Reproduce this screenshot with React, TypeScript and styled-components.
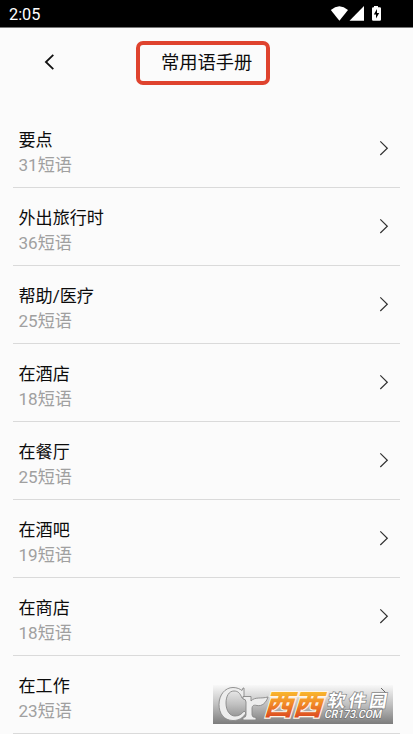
import React from 'react';
import styled, { createGlobalStyle } from 'styled-components';

const GlobalStyle = createGlobalStyle`
  * { box-sizing: border-box; }
  html, body { margin: 0; padding: 0; background: #fbfbfb; overflow: hidden; }
`;

const Screen = styled.div`
  position: relative;
  display: flex;
  flex-direction: column;
  width: 413px;
  height: 734px;
  overflow: hidden;
  background: #fbfbfb;
  color: #0c0c0c;
  font-family: Roboto, 'Noto Sans CJK SC', sans-serif;
`;

const StatusBar = styled.header`
  display: flex;
  flex: none;
  align-items: center;
  justify-content: space-between;
  height: 28px;
  padding: 0 31px 0 9px;
  background: #000;
  border-bottom: 1px solid #777;
  color: #fff;
`;

const Clock = styled.span`
  padding-top: 1px;
  font-size: 16.3px;
  font-weight: 450;
  line-height: 27px;
`;

const StatusIcons = styled.svg`
  display: block;
  width: 52px;
  height: 27px;
`;

const NavBar = styled.nav`
  display: flex;
  flex: none;
  height: 82px;
`;

const BackButton = styled.button`
  display: block;
  width: 20px;
  height: 24px;
  margin: 22px 0 0 40px;
  padding: 0;
  border: 0;
  background: none;
`;

const TitleFrame = styled.h1`
  width: 134px;
  height: 44px;
  margin: 13px 0 0 76px;
  padding-left: 21px;
  border: 4px solid #df432e;
  border-radius: 7px;
  font-size: 18.3px;
  font-weight: 400;
  line-height: 36px;
  white-space: nowrap;
`;

const PhraseList = styled.ul`
  flex: none;
  margin: 0 13px;
  padding: 0;
  list-style: none;
`;

const Row = styled.li`
  display: flex;
  justify-content: space-between;
  height: 78px;
  padding: 17px 11px 0 5.5px;
  border-bottom: 1px solid #dadada;
`;

const RowText = styled.div`
  display: flex;
  flex-direction: column;
`;

const RowTitle = styled.span`
  height: 25px;
  font-size: 17.1px;
  line-height: 26px;
`;

const RowCount = styled.span`
  height: 26px;
  color: #a0a0a0;
  font-size: 17.1px;
  font-weight: 400;
  line-height: 26px;
`;

const Chevron = styled.svg`
  width: 11px;
  height: 18px;
  margin-top: 12px;
`;

const Watermark = styled.svg`
  position: absolute;
  left: 213px;
  top: 685px;
  width: 180px;
  height: 39px;
  overflow: visible;
`;

const categories = [
  { title: '要点', count: 31 },
  { title: '外出旅行时', count: 36 },
  { title: '帮助/医疗', count: 25 },
  { title: '在酒店', count: 18 },
  { title: '在餐厅', count: 25 },
  { title: '在酒吧', count: 19 },
  { title: '在商店', count: 18 },
  { title: '在工作', count: 23 },
];

function SiteMark() {
  return (
    <Watermark viewBox="0 0 180 39">
      <defs>
        <linearGradient id="plate" x1="0" y1="0" x2="0" y2="1">
          <stop offset="0" stopColor="#f8f8f8" />
          <stop offset="0.5" stopColor="#c0c0c0" />
          <stop offset="1" stopColor="#7c7c7c" />
        </linearGradient>
        <linearGradient id="orange" x1="0" y1="0" x2="0" y2="1">
          <stop offset="0.25" stopColor="#f9b52c" />
          <stop offset="0.55" stopColor="#f08627" />
          <stop offset="0.85" stopColor="#dc4b20" />
        </linearGradient>
      </defs>
      <rect width="180" height="39" fill="url(#plate)" />
      <path
        d="M31 3V13H29C27 8 25 6 21 6C16 6 13 11 13 18C13 26 17 31 22 31C26 31 29 29 31 26L33 28C30 33 26 35.5 20 35.5C11 35.5 6 28.5 6 19.5C6 10 12 2.5 20 2.5C24 2.5 27 4 29 5.5L30 3Z"
        fill="#ededed" stroke="#888" strokeWidth="0.9"
      />
      <path
        d="M30 11.5H38V16C42 11.5 48 14 55 12C53 18 49 21.5 44 20.5C40 19.5 39 21 39 24V30Q39 32.5 43 32.5V35H30V32.5Q33 32.5 33 30V17Q33 14 30 14Z"
        fill="#ededed" stroke="#888" strokeWidth="0.9"
      />
      <g transform="translate(50.5 30.3) skewX(-17)">
        <text
          x="0" y="0" textLength="58" lengthAdjust="spacingAndGlyphs"
          fontFamily="'Noto Sans CJK SC', sans-serif" fontSize="28.5" fontWeight="900"
          fill="url(#orange)" stroke="#fff5e8" strokeWidth="2.2" paintOrder="stroke"
        >西西</text>
      </g>
      <path d="M168 3L174 9L173 11" fill="none" stroke="#666" strokeWidth="1" />
      <g transform="translate(114 21.5) skewX(-10)">
        <text
          x="0" y="0" textLength="59" lengthAdjust="spacing"
          fontFamily="'Noto Sans CJK SC', sans-serif" fontSize="17.5" fontWeight="700"
          fill="#fff" stroke="#888" strokeWidth="1.5" paintOrder="stroke"
        >软件园</text>
      </g>
      <g transform="translate(111 33) skewX(-12)">
        <text
          x="0" y="0" textLength="57" lengthAdjust="spacingAndGlyphs"
          fontFamily="Roboto, sans-serif" fontSize="11.5" fontWeight="500"
          fill="#fff" stroke="#777" strokeWidth="1.5" paintOrder="stroke"
        >CR173.COM</text>
      </g>
    </Watermark>
  );
}

export default function App() {
  return (
    <>
      <GlobalStyle />
      <Screen>
        <StatusBar>
          <Clock>2:05</Clock>
          <StatusIcons viewBox="0 0 52 27" fill="#fff">
            <path d="M0.8 10Q9.4 2.6 18 10L9.4 20.8Z" />
            <path d="M34 6V20.7H19.5Z" />
            <path d="M44 6H48V7.3H49.8Q51 7.3 51 8.5V19.5Q51 20.8 49.8 20.8H43.2Q42 20.8 42 19.5V8.5Q42 7.3 43.2 7.3H44Z" />
            <path d="M47 9L43.8 14.5H46V18.5L49.2 13H47Z" fill="#000" />
          </StatusIcons>
        </StatusBar>
        <NavBar>
          <BackButton aria-label="返回">
            <svg width="20" height="24" viewBox="0 0 20 24">
              <path d="M13.3 4.8L5.9 12L13.3 19.2" fill="none" stroke="#111" strokeWidth="1.8" />
            </svg>
          </BackButton>
          <TitleFrame>常用语手册</TitleFrame>
        </NavBar>
        <PhraseList>
          {categories.map(({ title, count }) => (
            <Row key={title}>
              <RowText>
                <RowTitle>{title}</RowTitle>
                <RowCount>{count}短语</RowCount>
              </RowText>
              <Chevron viewBox="0 0 11 18">
                <path d="M2.3 2.4L9.3 9.2L2.3 16" fill="none" stroke="#333" strokeWidth="1.2" />
              </Chevron>
            </Row>
          ))}
        </PhraseList>
        <SiteMark />
      </Screen>
    </>
  );
}
